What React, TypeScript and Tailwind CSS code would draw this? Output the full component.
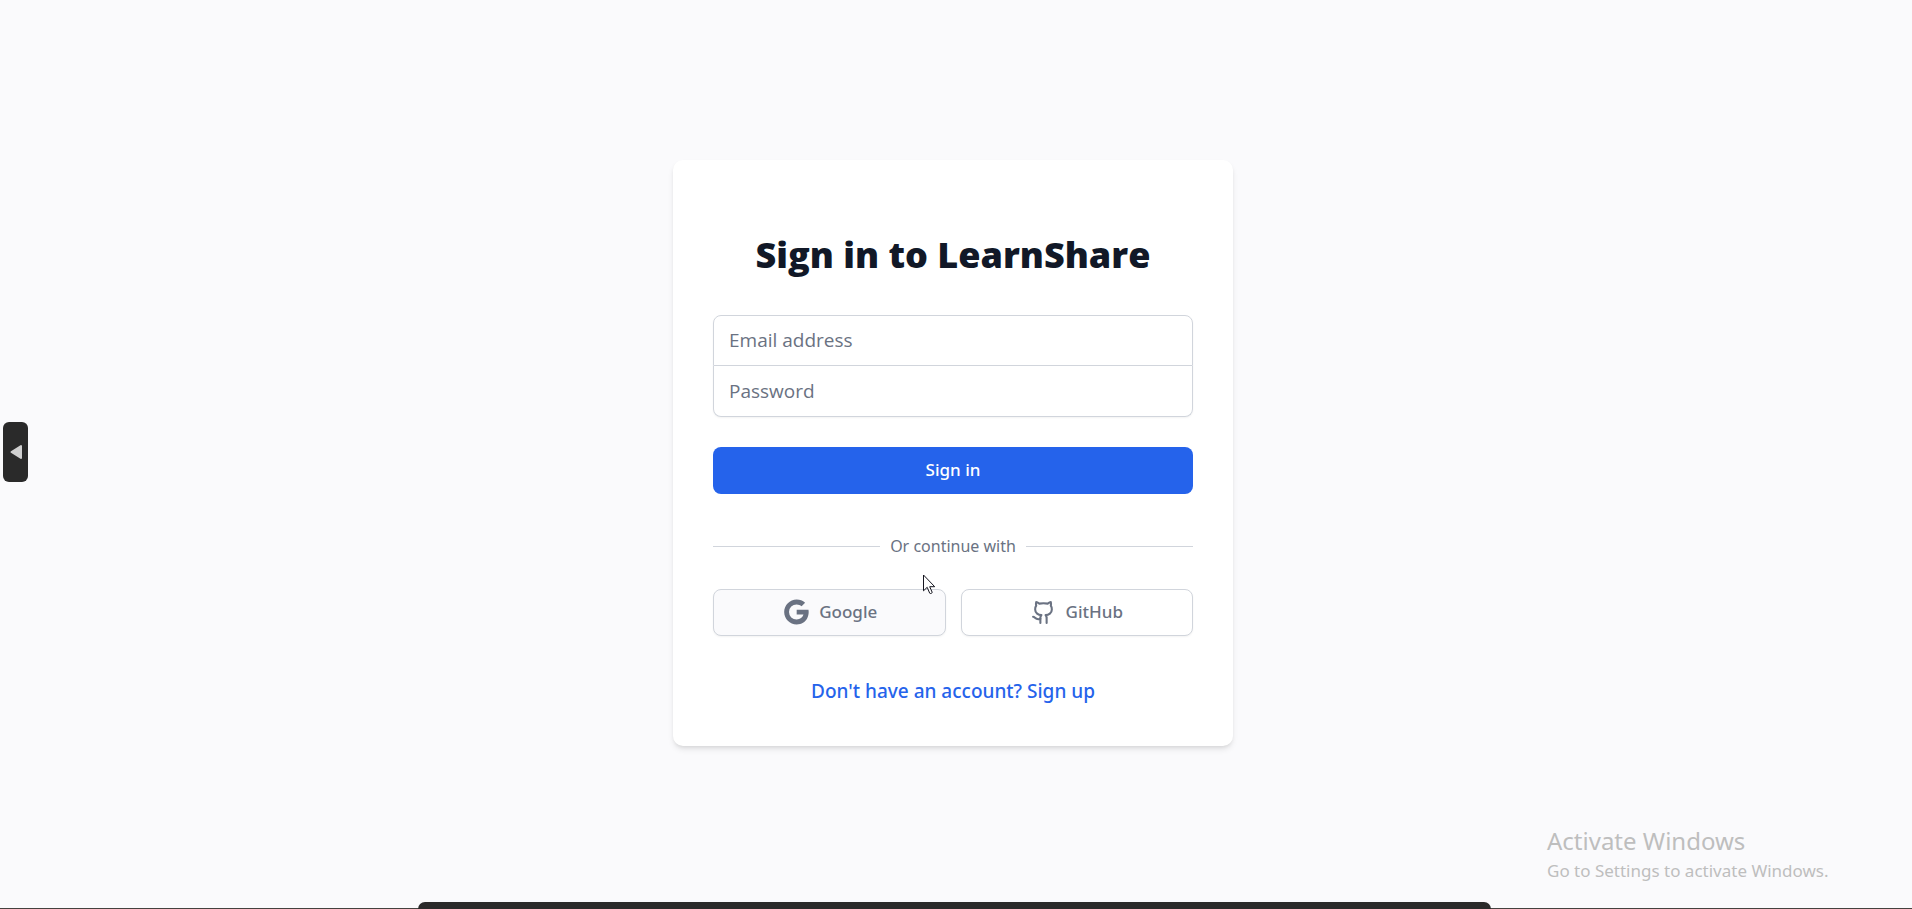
import { Github } from 'lucide-react';

function GoogleIcon() {
  return (
    <svg viewBox="0 0 24 24" className="size-[30px] text-gray-500" fill="currentColor" aria-hidden="true">
      <path d="M12.545 10.239v3.821h5.445c-.712 2.315-2.647 3.972-5.445 3.972a6.033 6.033 0 1 1 0-12.064c1.498 0 2.866.549 3.921 1.453l2.814-2.814A9.969 9.969 0 0 0 12.545 2C7.021 2 2.543 6.477 2.543 12s4.478 10 10.002 10c8.396 0 10.249-7.85 9.426-11.748l-9.426-.013z" />
    </svg>
  );
}

function Pointer() {
  return (
    <svg viewBox="0 0 13 21" className="absolute -top-[15px] right-[10px] h-[21px] w-[13px]" aria-hidden="true">
      <path
        d="M.5 1v15.8l3.7-3.5 2.5 5.9c.7.8 2.6 0 2.5-.9l-2.5-5.6h5z"
        fill="#fff"
        stroke="#15151f"
        strokeWidth="1"
      />
    </svg>
  );
}

const inputClass =
  "block w-full border-gray-300 bg-white px-[15px] font-['Open_Sans',sans-serif] text-[19px] text-gray-900 placeholder:text-gray-500 focus:outline-none";
const providerClass =
  'flex h-[47px] items-center justify-center rounded-lg border border-gray-300 text-[17px] font-medium text-gray-500 shadow-xs';

export default function App() {
  return (
    <div className="relative flex min-h-screen items-center justify-center overflow-hidden bg-[#fafafc] pr-1.5 pb-1 font-['Noto_Sans',sans-serif]">
      <main className="w-full max-w-[560px] rounded-[10px] bg-white p-10 shadow-md">
        <h1 className="mt-8 text-center font-['Open_Sans',sans-serif] text-4xl leading-[45px] font-extrabold text-[#111827]">
          Sign in to LearnShare
        </h1>

        <form className="mt-[38px]" onSubmit={(e) => e.preventDefault()}>
          <div className="rounded-lg shadow-xs">
            <input
              type="email"
              aria-label="Email address"
              placeholder="Email address"
              className={`${inputClass} h-[51px] rounded-t-lg border`}
            />
            <input
              type="password"
              aria-label="Password"
              placeholder="Password"
              className={`${inputClass} h-[51px] rounded-b-lg border-x border-b`}
            />
          </div>
          <button
            type="submit"
            className="mt-[30px] flex h-[47px] w-full items-center justify-center rounded-lg bg-[#2563eb] text-[17px] font-medium text-white"
          >
            Sign in
          </button>
        </form>

        <div className="mt-10 flex items-center gap-2.5 text-base leading-[25px] text-gray-500">
          <span className="h-px flex-1 bg-gray-300" />
          <span>Or continue with</span>
          <span className="h-px flex-1 bg-gray-300" />
        </div>

        <div className="mt-[30px] grid grid-cols-2 gap-[15px]">
          <div className="relative">
            <button type="button" className={`${providerClass} w-full gap-2 bg-[#fafafc]`}>
              <GoogleIcon />
              Google
            </button>
            <Pointer />
          </div>
          <button type="button" className={`${providerClass} gap-2.5 bg-white`}>
            <Github className="size-[25px]" aria-hidden="true" />
            GitHub
          </button>
        </div>

        <p className="mt-10 text-center text-[19px] leading-[30px] font-medium">
          <a href="#signup" className="text-[#2563eb]">
            Don't have an account? Sign up
          </a>
        </p>
      </main>

      <button
        type="button"
        aria-label="Open side panel"
        className="absolute top-[422px] left-[3px] flex h-[60px] w-[25px] items-center justify-center rounded-md bg-[#2a2a2a]"
      >
        <svg viewBox="0 0 12 16" className="h-4 w-3" aria-hidden="true">
          <path d="M11 2v12L1.5 8z" fill="#d0d0d0" stroke="#d0d0d0" strokeWidth="2" strokeLinejoin="round" />
        </svg>
      </button>

      <aside className="absolute right-20 bottom-6 w-[285px] text-[#bebebe]">
        <p className="text-2xl leading-8">Activate Windows</p>
        <p className="text-[17px] leading-7">Go to Settings to activate Windows.</p>
      </aside>

      <div className="absolute inset-x-0 bottom-0 h-px bg-[#45413f]" />
      <div className="absolute bottom-0 left-[418px] h-[7px] w-[1073px] rounded-t-lg bg-[#2a2a2a]" />
    </div>
  );
}
